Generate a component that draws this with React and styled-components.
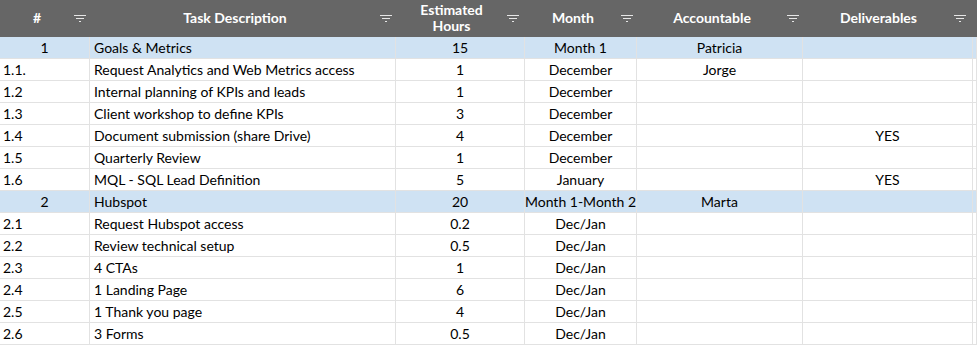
import React from "react";
import styled, { createGlobalStyle } from "styled-components";

const Global = createGlobalStyle`
  html, body { margin: 0; padding: 0; background: #fff; }
  body { font-family: Lato, "Open Sans", sans-serif; }
`;

const COLS = "90px 306px 129px 112px 166px 170px 1fr";

const Sheet = styled.div`
  display: grid;
  grid-template-columns: ${COLS};
  width: 977px;
  overflow: hidden;
  font-size: 14px;
  color: #000;
`;

const HeadCell = styled.div`
  height: 37px;
  background: #666666;
  color: #fff;
  font-weight: 700;
  display: flex;
  align-items: center;
  padding: 0 ${(p) => p.$pr ?? 4}px 2px 0;
  box-sizing: border-box;
`;

const HeadLabel = styled.div`
  flex: 1;
  text-align: center;
  line-height: 16px;
  font-size: 14px;
`;

const Cell = styled.div`
  height: 22px;
  box-sizing: border-box;
  border-right: 1px solid #e2e2e2;
  border-bottom: 1px solid #e2e2e2;
  background: ${(p) => (p.$group ? "#cfe2f3" : "#fff")};
  display: flex;
  align-items: center;
  justify-content: ${(p) => (p.$align === "left" ? "flex-start" : "center")};
  padding-left: ${(p) => (p.$align === "left" ? p.$pl ?? 4 : 0)}px;
  white-space: nowrap;
  font-size: 14px;
  line-height: 22px;
`;

const FilterIcon = () => (
  <svg width="12" height="7" viewBox="0 0 12 7" style={{ flex: "none", marginTop: 2 }}>
    <rect x="0" y="0" width="12" height="1" fill="#e6e6e6" />
    <rect x="2" y="3" width="8" height="1" fill="#e6e6e6" />
    <rect x="5" y="6" width="2" height="1" fill="#e6e6e6" />
  </svg>
);

const headers = [
  { label: "#" },
  { label: "Task Description" },
  { label: ["Estimated", "Hours"], pr: 6 },
  { label: "Month" },
  { label: "Accountable" },
  { label: "Deliverables", pr: 7 },
];

const rows = [
  ["1", "Goals & Metrics", "15", "Month 1", "Patricia", "", true],
  ["1.1.", "Request Analytics and Web Metrics access", "1", "December", "Jorge", ""],
  ["1.2", "Internal planning of KPIs and leads", "1", "December", "", ""],
  ["1.3", "Client workshop to define KPIs", "3", "December", "", ""],
  ["1.4", "Document submission (share Drive)", "4", "December", "", "YES"],
  ["1.5", "Quarterly Review", "1", "December", "", ""],
  ["1.6", "MQL - SQL Lead Definition", "5", "January", "", "YES"],
  ["2", "Hubspot", "20", "Month 1-Month 2", "Marta", "", true],
  ["2.1", "Request Hubspot access", "0.2", "Dec/Jan", "", ""],
  ["2.2", "Review technical setup", "0.5", "Dec/Jan", "", ""],
  ["2.3", "4 CTAs", "1", "Dec/Jan", "", ""],
  ["2.4", "1 Landing Page", "6", "Dec/Jan", "", ""],
  ["2.5", "1 Thank you page", "4", "Dec/Jan", "", ""],
  ["2.6", "3 Forms", "0.5", "Dec/Jan", "", ""],
];

export default function App() {
  return (
    <>
      <Global />
      <Sheet>
        {headers.map((h, i) => (
          <HeadCell key={i} $pr={h.pr}>
            <HeadLabel>
              {Array.isArray(h.label) ? (
                <>
                  {h.label[0]}
                  <br />
                  {h.label[1]}
                </>
              ) : (
                h.label
              )}
            </HeadLabel>
            <FilterIcon />
          </HeadCell>
        ))}
        <HeadCell />
        {rows.map((r, ri) => {
          const group = r[6];
          return (
            <React.Fragment key={ri}>
              <Cell $group={group} $align={group ? "center" : "left"} $pl={3}>
                {r[0]}
              </Cell>
              <Cell $group={group} $align="left">
                {r[1]}
              </Cell>
              <Cell $group={group}>{r[2]}</Cell>
              <Cell $group={group}>{r[3]}</Cell>
              <Cell $group={group}>{r[4]}</Cell>
              <Cell $group={group}>{r[5]}</Cell>
              <Cell $group={group} />
            </React.Fragment>
          );
        })}
      </Sheet>
    </>
  );
}
